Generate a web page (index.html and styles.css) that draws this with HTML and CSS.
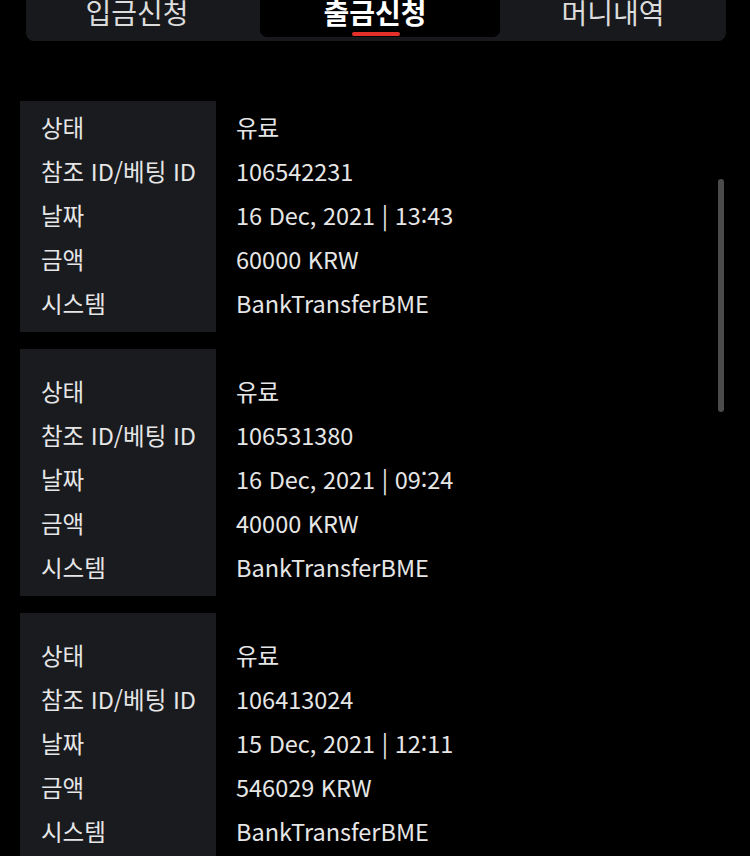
FILE: index.html
```html
<!DOCTYPE html>
<html lang="ko">
<head>
  <meta charset="UTF-8">
  <meta name="viewport" content="width=device-width, initial-scale=1.0">
  <title>출금신청</title>
  <link rel="stylesheet" href="styles.css">
</head>
<body>

  <nav class="tabs">
    <a class="tab tab-first">입금신청</a>
    <a class="tab active">출금신청</a>
    <a class="tab">머니내역</a>
  </nav>

  <!-- 출금 내역 -->
  <div class="history">
    <div class="list">

      <div class="card">
        <div class="labels">
          <span>상태</span>
          <span>참조 ID/베팅 ID</span>
          <span>날짜</span>
          <span>금액</span>
          <span>시스템</span>
        </div>
        <div class="values">
          <span>유료</span>
          <span>106542231</span>
          <span>16 Dec, 2021 | 13:43</span>
          <span>60000 KRW</span>
          <span>BankTransferBME</span>
        </div>
      </div>

      <div class="card">
        <div class="labels">
          <span>상태</span>
          <span>참조 ID/베팅 ID</span>
          <span>날짜</span>
          <span>금액</span>
          <span>시스템</span>
        </div>
        <div class="values">
          <span>유료</span>
          <span>106531380</span>
          <span>16 Dec, 2021 | 09:24</span>
          <span>40000 KRW</span>
          <span>BankTransferBME</span>
        </div>
      </div>

      <div class="card">
        <div class="labels">
          <span>상태</span>
          <span>참조 ID/베팅 ID</span>
          <span>날짜</span>
          <span>금액</span>
          <span>시스템</span>
        </div>
        <div class="values">
          <span>유료</span>
          <span>106413024</span>
          <span>15 Dec, 2021 | 12:11</span>
          <span>546029 KRW</span>
          <span>BankTransferBME</span>
        </div>
      </div>

    </div>
    <div class="scrollbar"></div>
  </div>

</body>
</html>
```

FILE: styles.css
```css
* {
  margin: 0;
  padding: 0;
  box-sizing: border-box;
}

html, body {
  height: 856px;
  overflow: hidden;
}

body {
  background: #000;
  color: #e6e6e6;
  font-family: "Noto Sans CJK KR", "Noto Sans", sans-serif;
}

/* 상단 탭 */
.tabs {
  display: flex;
  width: 700px;
  height: 55px;
  margin: -14px 0 0 26px;
  padding-bottom: 4px;
  background: #18191d;
  border-radius: 0 0 8px 8px;
}

.tab {
  display: flex;
  align-items: center;
  justify-content: center;
  width: 226px;
  font-size: 28px;
  color: #dcdcdc;
  position: relative;
}

.tab-first {
  width: 222px;
  margin-right: 12px;
}

.tab.active {
  width: 240px;
  padding-right: 10px;
  background: #000;
  border-radius: 0 0 7px 7px;
  color: #fff;
  font-weight: 700;
}

.tab.active::after {
  content: "";
  position: absolute;
  left: 92px;
  bottom: 1px;
  width: 48px;
  height: 4px;
  border-radius: 2px;
  background: #e3302a;
}

/* 내역 목록 */
.history {
  position: relative;
  height: 755px;
  margin-top: 60px;
  overflow: hidden;
}

.list {
  display: flex;
  flex-direction: column;
  gap: 17px;
  margin: -16px 0 0 20px;
}

.card {
  display: grid;
  grid-template-columns: 196px 1fr;
  font-size: 23.5px;
  line-height: 44px;
}

.labels, .values {
  display: flex;
  flex-direction: column;
  padding: 20px 0 7px;
}

.labels {
  padding-left: 21px;
  background: #1a1b1f;
}

.values {
  padding-left: 20px;
}

.scrollbar {
  position: absolute;
  top: 78px;
  right: 26px;
  width: 6px;
  height: 233px;
  border-radius: 3px;
  background: #4b4b4b;
}
```
